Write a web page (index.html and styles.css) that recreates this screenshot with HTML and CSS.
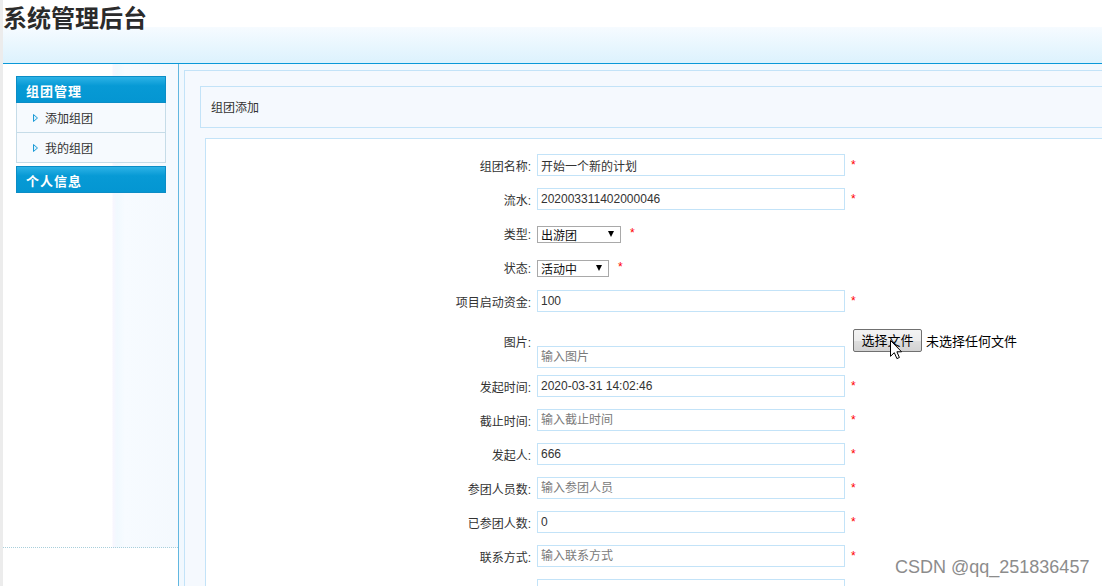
FILE: index.html
```html
<!DOCTYPE html>
<html lang="zh-CN">
<head>
<meta charset="utf-8">
<title>系统管理后台</title>
<link rel="stylesheet" href="styles.css">
</head>
<body>
<div class="page">
  <header class="top">
    <h1 class="title">系统管理后台</h1>
  </header>
  <div class="layout">
    <aside class="side">
      <div class="side-panel">
        <nav class="menu">
          <div class="menu-head">组团管理</div>
          <ul class="menu-list">
            <li class="menu-item"><svg class="tri" width="5" height="8" viewBox="0 0 5 8"><polygon points="0.5,0.5 4.5,4 0.5,7.5" fill="#dff2fb" stroke="#1b9bd7" stroke-width="1"/></svg>添加组团</li>
            <li class="menu-item"><svg class="tri" width="5" height="8" viewBox="0 0 5 8"><polygon points="0.5,0.5 4.5,4 0.5,7.5" fill="#dff2fb" stroke="#1b9bd7" stroke-width="1"/></svg>我的组团</li>
          </ul>
          <div class="menu-head menu-head-2">个人信息</div>
        </nav>
      </div>
    </aside>
    <main class="main">
      <div class="frame">
        <div class="crumb">组团添加</div>
        <div class="form-box">
          <form class="form">
            <div class="row">
              <label class="label">组团名称:</label>
              <input class="input" type="text" value="开始一个新的计划">
              <span class="req">*</span>
            </div>
            <div class="row">
              <label class="label">流水:</label>
              <input class="input" type="text" value="202003311402000046">
              <span class="req">*</span>
            </div>
            <div class="row">
              <label class="label">类型:</label>
              <span class="sel-wrap"><select class="sel sel-type"><option>出游团</option></select></span>
              <span class="req">*</span>
            </div>
            <div class="row">
              <label class="label">状态:</label>
              <span class="sel-wrap"><select class="sel sel-state"><option>活动中</option></select></span>
              <span class="req">*</span>
            </div>
            <div class="row">
              <label class="label">项目启动资金:</label>
              <input class="input" type="text" value="100">
              <span class="req">*</span>
            </div>
            <div class="row row-img">
              <label class="label label-img">图片:</label>
              <input class="input input-img" type="text" placeholder="输入图片">
              <div class="file">
                <span class="file-btn">选择文件</span>
                <span class="file-name">未选择任何文件</span>
                <svg class="cursor" width="13" height="20" viewBox="0 0 13 20"><polygon points="0.5,0.5 0.5,16.3 4.3,12.7 6.9,18.6 9.4,17.5 6.9,11.8 11.6,11.8" fill="#fff" stroke="#000" stroke-width="1" stroke-linejoin="miter"/></svg>
              </div>
            </div>
            <div class="row">
              <label class="label">发起时间:</label>
              <input class="input" type="text" value="2020-03-31 14:02:46">
              <span class="req">*</span>
            </div>
            <div class="row">
              <label class="label">截止时间:</label>
              <input class="input" type="text" placeholder="输入截止时间">
              <span class="req">*</span>
            </div>
            <div class="row">
              <label class="label">发起人:</label>
              <input class="input" type="text" value="666">
              <span class="req">*</span>
            </div>
            <div class="row">
              <label class="label">参团人员数:</label>
              <input class="input" type="text" placeholder="输入参团人员">
              <span class="req">*</span>
            </div>
            <div class="row">
              <label class="label">已参团人数:</label>
              <input class="input" type="text" value="0">
              <span class="req">*</span>
            </div>
            <div class="row">
              <label class="label">联系方式:</label>
              <input class="input" type="text" placeholder="输入联系方式">
              <span class="req">*</span>
            </div>
            <div class="row">
              <label class="label"></label>
              <input class="input" type="text">
            </div>
          </form>
        </div>
      </div>
    </main>
  </div>
</div>
<div class="watermark">CSDN @qq_251836457</div>
</body>
</html>
```
FILE: styles.css
```css
* { box-sizing: border-box; }
html, body { margin: 0; padding: 0; }
body {
  width: 1102px;
  height: 586px;
  overflow: hidden;
  position: relative;
  background: #fff;
  font-family: "Liberation Sans", "Noto Sans CJK SC", sans-serif;
  font-size: 12px;
  color: #333;
}
.page {
  width: 1400px;
  min-height: 586px;
  border-left: 3px solid #ececec;
}

/* header */
.top {
  height: 64px;
  border-bottom: 1px solid #0a98d8;
  background: linear-gradient(to bottom, #fff 0, #fff 27px, #f6fbff 27px, #dcf2fd 63px);
}
.title {
  margin: 0;
  font: bold 24px/34px "Noto Sans CJK SC", sans-serif;
  color: #2b2b2b;
}

/* layout */
.layout { display: flex; align-items: stretch; }

.side {
  flex: none;
  width: 176px;
  min-height: 522px;
  border-right: 1px solid #62b7e0;
  background: #fff;
}
.side-panel {
  height: 484px;
  padding: 12px 0 0 13px;
  border-bottom: 1px dotted #a9cfdb;
  background: linear-gradient(to right, #fff 0, #fff 109px, #f8f6fe 110px, #f1f9fe 114px, #f7fbff 122px, #f4f9fe 100%);
}
.menu { width: 150px; }
.menu-head {
  height: 27px;
  border: 1px solid #0b8dc6;
  background: linear-gradient(to bottom, #2db2e6 0, #079ad5 35%, #0496d2 100%);
  color: #fff;
  font: bold 13px/22px "Noto Sans CJK SC", sans-serif;
  letter-spacing: 1px;
  padding: 3px 0 0 9px;
}
.menu-head-2 { margin-top: 3px; }
.menu-list { list-style: none; margin: 0; padding: 0; }
.menu-item {
  display: flex;
  align-items: center;
  height: 30px;
  border: 1px solid #c6dce8;
  border-top: none;
  background: #f6fafe;
  padding-left: 16px;
  font: 12px/29px "Noto Sans CJK SC", sans-serif;
  color: #333;
}
.tri { flex: none; margin-right: 7px; }

/* main */
.main {
  flex: 1;
  background: #f1f8fe;
  padding: 6px 0 0 5px;
}
.frame {
  min-height: 600px;
  border-top: 1px solid #c3e3f8;
  border-left: 1px solid #c3e3f8;
  background: #f5f9fe;
  padding: 15px 0 0 15px;
}
.crumb {
  height: 42px;
  border: 1px solid #c3e3f8;
  background: #f5f9fe;
  padding-left: 10px;
  font: 12px/40px "Noto Sans CJK SC", sans-serif;
  color: #333;
}
.form-box {
  margin: 10px 0 0 5px;
  min-height: 600px;
  border: 1px solid #c3e3f8;
  background: #fff;
  padding-top: 9px;
}
.form { margin: 0; }
.row {
  display: flex;
  align-items: center;
  height: 34px;
}
.label {
  flex: none;
  width: 325px;
  margin-right: 6px;
  text-align: right;
  color: #333;
  font-size: 12px;
}
.input {
  flex: none;
  width: 308px;
  height: 22px;
  margin: 0;
  border: 1px solid #c3e3f8;
  border-radius: 0;
  padding: 0 3px;
  font: 12px "Liberation Sans", "Noto Sans CJK SC", sans-serif;
  color: #333;
  background: #fff;
  outline: none;
}
.input::placeholder { color: #7a7a7a; }
.req {
  margin-left: 6px;
  color: #ff0000;
  font-size: 12px;
}

.sel-wrap {
  position: relative;
  display: inline-block;
  margin-right: 3px;
  margin-top: 2px;
}
.sel-wrap::after {
  content: "";
  position: absolute;
  right: 7px;
  top: 5px;
  border-left: 3px solid transparent;
  border-right: 3px solid transparent;
  border-top: 6px solid #000;
  pointer-events: none;
}
.sel {
  display: block;
  -webkit-appearance: none;
  appearance: none;
  height: 17px;
  margin: 0;
  border: 1px solid #a9a9a9;
  border-radius: 0;
  background: #fff;
  padding: 0 0 0 3px;
  font: 12px/15px "Noto Sans CJK SC", sans-serif;
  color: #111;
  outline: none;
}
.sel-type { width: 84px; }
.sel-state { width: 72px; }

/* picture row */
.row-img {
  height: 51px;
  align-items: flex-start;
}
.label-img {
  padding-top: 15px;
  line-height: 20px;
}
.input-img { margin-top: 28px; }
.file {
  position: relative;
  display: flex;
  align-items: center;
  margin: 11px 0 0 8px;
  font: 13px "Noto Sans CJK SC", sans-serif;
  color: #000;
}
.file-btn {
  width: 69px;
  height: 23px;
  border: 1px solid #707070;
  border-radius: 2px;
  background: linear-gradient(to bottom, #f3f3f3 0%, #ececec 50%, #dedede 51%, #d2d2d2 100%);
  text-align: center;
  line-height: 20px;
}
.file-name { margin-left: 4px; }
.cursor {
  position: absolute;
  left: 37px;
  top: 11px;
}

.watermark {
  position: absolute;
  left: 895px;
  top: 557px;
  font: 18px/20px "Liberation Sans", sans-serif;
  color: #8c8c8c;
  white-space: nowrap;
}
```
